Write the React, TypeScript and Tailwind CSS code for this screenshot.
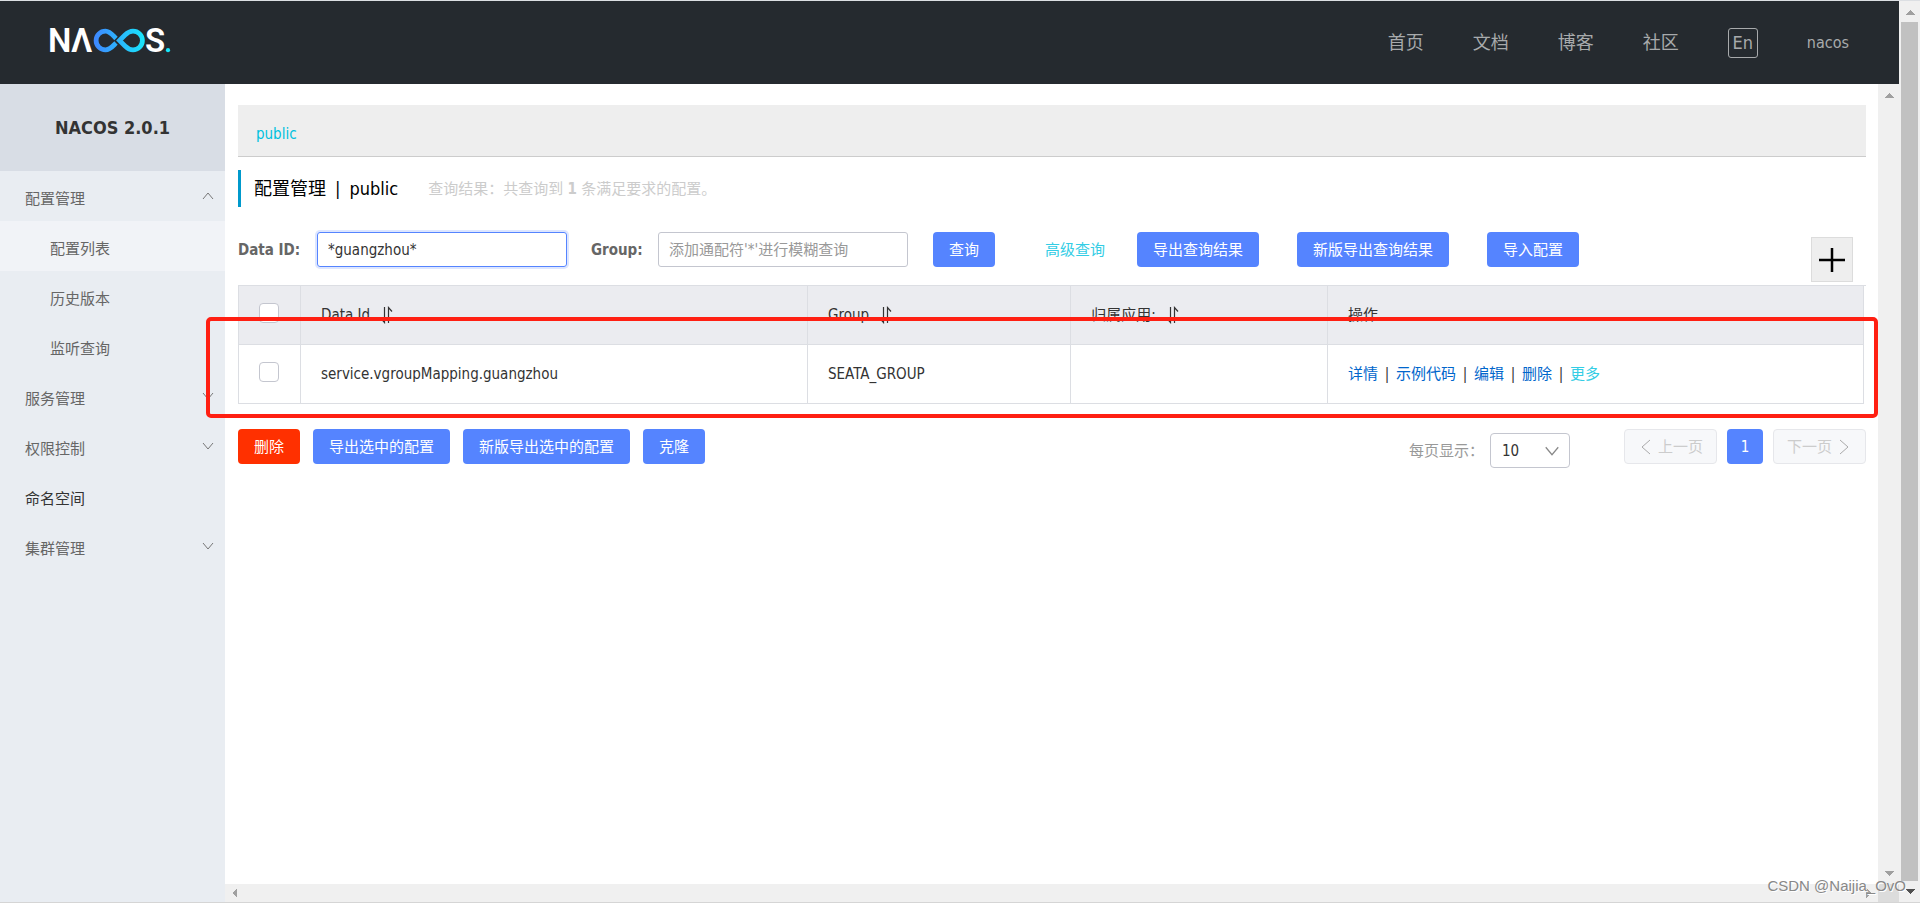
import { useState } from "react";

type Direction = "up" | "down" | "left" | "right";

const ARROWS: Record<Direction, string> = {
  up: "M0 8 L5 3 L10 8 Z",
  down: "M0 3 L5 8 L10 3 Z",
  left: "M7 0 L2 5 L7 10 Z",
  right: "M3 0 L8 5 L3 10 Z",
};

const CHEVRONS: Record<Direction, string> = {
  up: "M3 11 L8 5 L13 11",
  down: "M3 5 L8 11 L13 5",
  left: "M12 1 L4 8 L12 15",
  right: "M4 1 L12 8 L4 15",
};

function Arrow({ dir, className = "text-[#a0a0a0]" }: { dir: Direction; className?: string }) {
  return (
    <svg viewBox="0 0 10 10" className={`h-[10px] w-[10px] ${className}`} aria-hidden="true">
      <path d={ARROWS[dir]} fill="currentColor" shapeRendering="crispEdges" />
    </svg>
  );
}

function Chevron({ dir, className }: { dir: Direction; className: string }) {
  return (
    <svg viewBox="0 0 16 16" className={className} fill="none" stroke="currentColor" aria-hidden="true">
      <path d={CHEVRONS[dir]} />
    </svg>
  );
}

function Logo() {
  return (
    <svg viewBox="-9 -12 140 50" className="h-[50px] w-[140px]" role="img" aria-label="NACOS">
      <defs>
        <linearGradient id="loop" gradientUnits="userSpaceOnUse" x1="45" y1="0" x2="96" y2="0">
          <stop offset="0" stopColor="#3f87ff" />
          <stop offset="1" stopColor="#17e6fb" />
        </linearGradient>
      </defs>
      <g fill="#fff" className="font-['Roboto',sans-serif] text-[33px] font-semibold">
        <text x="-1" y="24">N</text>
        <text x="22" y="24">Λ</text>
        <text x="96" y="24">S</text>
      </g>
      <g fill="none" stroke="url(#loop)" strokeWidth="4.8">
        <path d="M67 10.5 C63.500 7 61 3.100 56.500 3.100 A9.400 9.400 0 0 0 56.500 21.900 C61 21.900 63.500 18.500 67 15" />
        <path d="M70.500 12.500 L76 7 Q80 3.100 84 3.100 A9.400 9.400 0 0 1 84 21.900 Q80 21.900 76 18 Z" />
      </g>
      <circle cx="119" cy="22.200" r="2.100" fill="#17e6fb" />
    </svg>
  );
}

function SortIcon() {
  return (
    <svg viewBox="0 0 14 18" className="h-[18px] w-[14px]" fill="none" stroke="#333" strokeWidth="1.2" aria-hidden="true">
      <path d="M4.500 1 V16.500 L1 12.500 M8.500 17 V1.500 L12 5.500" />
    </svg>
  );
}

function PrimaryButton({ children }: { children: string }) {
  return (
    <button type="button" className="h-[35px] shrink-0 rounded-[4px] bg-[#5584ff] px-4 text-white">
      {children}
    </button>
  );
}

const NAV = ["首页", "文档", "博客", "社区"];

const MENU: { label: string; chevron?: Direction; sub?: boolean; active?: boolean; dark?: boolean }[] = [
  { label: "配置管理", chevron: "up" },
  { label: "配置列表", sub: true, active: true },
  { label: "历史版本", sub: true },
  { label: "监听查询", sub: true },
  { label: "服务管理", chevron: "down" },
  { label: "权限控制", chevron: "down" },
  { label: "命名空间", dark: true },
  { label: "集群管理", chevron: "down" },
];

function Header() {
  return (
    <header className="flex h-[83px] shrink-0 items-center justify-between bg-[#252a2f] pl-10 pr-[50px] text-[#a8aaac]">
      <a href="#home" className="-mt-1">
        <Logo />
      </a>
      <nav className="flex items-center gap-[49px] text-[18px]">
        {NAV.map((label) => (
          <a key={label} href="#nav">{label}</a>
        ))}
        <button type="button" className="flex h-[30px] w-[30px] items-center justify-center rounded-[3px] border border-[#a8aaac]">
          En
        </button>
        <a href="#user" className="text-[16px]">nacos</a>
      </nav>
    </header>
  );
}

function Sidebar() {
  return (
    <aside className="w-[225px] shrink-0 bg-[#e9edf2] text-[#666]">
      <h1 className="flex h-[87px] items-center justify-center bg-[#d8dde5] text-[18px] font-bold text-[#333]">
        NACOS 2.0.1
      </h1>
      <ul>
        {MENU.map((item) => (
          <li key={item.label} className={item.active ? "bg-[#f1f3f7]" : ""}>
            <button
              type="button"
              className={`flex h-[50px] w-full items-center justify-between pr-[9px] pt-[6px] ${item.sub ? "pl-[50px]" : "pl-[25px]"} ${item.dark ? "text-[#333]" : ""}`}
            >
              {item.label}
              {item.chevron && <Chevron dir={item.chevron} className="mb-[6px] h-4 w-4 text-[#777]" />}
            </button>
          </li>
        ))}
      </ul>
    </aside>
  );
}

function SearchBar() {
  const [dataId, setDataId] = useState("*guangzhou*");
  return (
    <form className="mt-[25px] flex h-[53px] items-start" onSubmit={(e) => e.preventDefault()}>
      <label htmlFor="data-id" className="w-[79px] shrink-0 font-bold leading-9 text-[#666]">Data ID:</label>
      <input
        id="data-id"
        value={dataId}
        onChange={(e) => setDataId(e.target.value)}
        className="h-[35px] w-[250px] rounded-[3px] border border-[#5584ff] px-[10px] text-[#333] shadow-[0_0_0_2px_#dde6ff] outline-none"
      />
      <label htmlFor="group" className="ml-6 w-[67px] shrink-0 font-bold leading-9 text-[#666]">Group:</label>
      <input
        id="group"
        placeholder="添加通配符'*'进行模糊查询"
        className="mr-[25px] h-[35px] w-[250px] rounded-[3px] border border-[#c4c6cf] px-[10px] outline-none placeholder:text-[#999]"
      />
      <PrimaryButton>查询</PrimaryButton>
      <a href="#advanced" className="ml-[50px] mr-8 shrink-0 leading-9 text-[#33cde5]">高级查询</a>
      <div className="flex gap-[38px]">
        <PrimaryButton>导出查询结果</PrimaryButton>
        <PrimaryButton>新版导出查询结果</PrimaryButton>
        <PrimaryButton>导入配置</PrimaryButton>
      </div>
      <button
        type="button"
        aria-label="新建配置"
        className="ml-auto mr-[13px] mt-[5px] flex h-[45px] w-[42px] items-center justify-center border border-[#dcdcdc] bg-[#eee]"
      >
        <svg viewBox="0 0 26 26" className="h-[26px] w-[26px]" stroke="#000" strokeWidth="2.5" aria-hidden="true">
          <path d="M0 13 H26 M13 1 V25" />
        </svg>
      </button>
    </form>
  );
}

function Operations() {
  const links = ["详情", "示例代码", "编辑", "删除"];
  return (
    <div className="flex">
      {links.map((label) => (
        <span key={label} className="flex">
          <a href="#op" className="text-[#06c]">{label}</a>
          <span className="w-[18px] text-center">|</span>
        </span>
      ))}
      <a href="#more" className="text-[#33cde5]">更多</a>
    </div>
  );
}

const BOX = "block mx-auto h-5 w-5 appearance-none rounded-[4px] border border-[#c4c6cf] bg-white";
const CHECK_CELL = "h-[59px] border border-[#dcdee3] pb-1 pr-[2px]";
const CELL = "h-[59px] border border-[#dcdee3] px-5 text-left font-normal";

function ConfigTable() {
  return (
    <div className="relative border-t border-[#dcdee3] pr-[2px]">
      <table className="-mt-px w-full table-fixed border-collapse text-[#333]">
        <colgroup>
          <col className="w-[62px]" />
          <col className="w-[31.2%]" />
          <col className="w-[16.2%]" />
          <col className="w-[15.8%]" />
          <col />
        </colgroup>
        <thead className="bg-[#ebecf0]">
          <tr>
            <th className={CHECK_CELL}><input type="checkbox" aria-label="全选" className={BOX} /></th>
            <th className={CELL}><span className="flex items-center gap-[10px]">Data Id <SortIcon /></span></th>
            <th className={CELL}><span className="flex items-center gap-[10px]">Group <SortIcon /></span></th>
            <th className={CELL}><span className="flex items-center gap-[10px]">归属应用: <SortIcon /></span></th>
            <th className={CELL}>操作</th>
          </tr>
        </thead>
        <tbody>
          <tr>
            <td className={CHECK_CELL}><input type="checkbox" aria-label="选择" className={BOX} /></td>
            <td className={CELL}>service.vgroupMapping.guangzhou</td>
            <td className={CELL}>SEATA_GROUP</td>
            <td className={CELL} />
            <td className={CELL}><Operations /></td>
          </tr>
        </tbody>
      </table>
      <div className="pointer-events-none absolute -bottom-[14px] -left-8 -right-3 top-[31px] z-10 rounded-[5px] border-4 border-[#ff1f12]" />
    </div>
  );
}

function Footer() {
  const pageButton = "flex h-[35px] w-[93px] items-center justify-center gap-1 rounded-[4px] border border-[#e6e7eb] bg-[#f7f8fa] text-[#ccc]";
  return (
    <div className="mt-[25px] flex items-start justify-between">
      <div className="flex gap-[13px]">
        <button type="button" className="h-[35px] rounded-[4px] bg-[#ff3000] px-4 text-white">删除</button>
        <PrimaryButton>导出选中的配置</PrimaryButton>
        <PrimaryButton>新版导出选中的配置</PrimaryButton>
        <PrimaryButton>克隆</PrimaryButton>
      </div>
      <div className="flex items-start">
        <div className="mr-[54px] mt-1 flex items-center">
          <label htmlFor="page-size" className="w-[81px] whitespace-nowrap text-[#999]">每页显示：</label>
          <div className="relative">
            <select id="page-size" className="h-[35px] w-20 appearance-none rounded-[4px] border border-[#c4c6cf] bg-white pl-[11px] text-[#333]">
              <option>10</option>
              <option>20</option>
            </select>
            <Chevron dir="down" className="pointer-events-none absolute right-2 top-2 h-5 w-5 text-[#888]" />
          </div>
        </div>
        <div className="flex gap-[10px]">
          <button type="button" disabled className={pageButton}>
            <Chevron dir="left" className="h-4 w-4 text-[#aaa]" />上一页
          </button>
          <button type="button" className="h-[35px] w-9 rounded-[4px] bg-[#5584ff] text-white">1</button>
          <button type="button" disabled className={pageButton}>
            下一页<Chevron dir="right" className="h-4 w-4 text-[#aaa]" />
          </button>
        </div>
      </div>
    </div>
  );
}

export default function App() {
  return (
    <div className="relative flex h-screen border-b border-t border-b-[#d5d5d5] border-t-[#dcdfe3] bg-white font-['DejaVu_Sans_Condensed','Noto_Sans_CJK_SC',sans-serif] text-[15px] leading-[22px]">
      <div className="flex min-w-0 flex-1 flex-col">
        <Header />
        <div className="flex min-h-0 flex-1">
          <Sidebar />
          <div className="flex min-w-0 flex-1 flex-col">
            <main className="min-h-0 flex-1 pl-[13px] pr-3 pt-[21px]">
              <div className="flex h-[52px] items-center border-b border-[#ccc] bg-[#eee] px-[18px] pt-[6px]">
                <a href="#public" className="text-[#00c1de]">public</a>
              </div>
              <div className="mt-[13px] flex h-[37px] items-center border-l-[3px] border-[#09c] pl-[13px]">
                <h2 className="flex gap-[9px] text-[18px] text-black">
                  <span>配置管理</span>
                  <span>|</span>
                  <span>public</span>
                </h2>
                <p className="ml-[30px] pt-px text-[#ccc]">
                  查询结果：共查询到 <strong>1</strong> 条满足要求的配置。
                </p>
              </div>
              <SearchBar />
              <ConfigTable />
              <Footer />
            </main>
            <div className="flex h-[18px] shrink-0 items-center justify-between bg-[#f0f0f0] px-[5px]" aria-hidden="true">
              <Arrow dir="left" />
              <Arrow dir="right" />
            </div>
          </div>
          <div className="flex w-[21px] shrink-0 flex-col bg-[#f0f0f0]" aria-hidden="true">
            <div className="flex flex-1 flex-col items-center justify-between py-[6px]">
              <Arrow dir="up" />
              <Arrow dir="down" />
            </div>
            <div className="h-[18px] bg-[#dcdcdc]" />
          </div>
        </div>
      </div>
      <div className="flex w-[21px] shrink-0 flex-col items-center gap-[5px] bg-[#f0f0f0] py-[6px]" aria-hidden="true">
        <Arrow dir="up" />
        <div className="w-[17px] flex-1 bg-[#c1c1c1]" />
        <Arrow dir="down" className="text-[#505050]" />
      </div>
      <div className="pointer-events-none absolute bottom-[5px] right-[14px] z-20 font-['Liberation_Sans',sans-serif] text-[15px] text-[#888] [text-shadow:1px_1px_0_#fff]">
        CSDN @Naijia_OvO
      </div>
    </div>
  );
}
